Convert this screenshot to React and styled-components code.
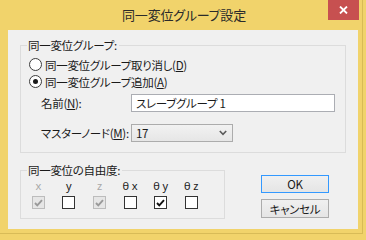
import React from "react";
import styled, { createGlobalStyle, css } from "styled-components";

const Global = createGlobalStyle`
  html, body { margin: 0; padding: 0; }
  body {
    background: #F1D36B;
    width: 366px;
    height: 237px;
    overflow: hidden;
    font-family: "Noto Sans CJK JP", "Noto Sans", sans-serif;
    font-feature-settings: "palt";
    font-size: 11.5px;
    letter-spacing: -0.3px;
    color: #1a1a1a;
  }
`;

const Window = styled.div`
  width: 362px;
  height: 233px;
  background: #F1D36B;
  border-right: 1px solid #D8BB57;
  border-bottom: 1px solid #D8BB57;
  display: flex;
  flex-direction: column;
`;

const TitleBar = styled.div`
  height: 30px;
  display: grid;
  grid-template-columns: 1fr auto 1fr;
  align-items: start;
`;

const Title = styled.div`
  font-size: 13px;
  line-height: 30px;
  color: #2a2a2a;
  letter-spacing: -0.2px;
  padding-left: 6px;
`;

const CloseButton = styled.div`
  justify-self: end;
  margin-right: 3px;
  width: 31px;
  height: 20px;
  background: #C75050;
  display: flex;
  align-items: center;
  justify-content: center;
`;

const Client = styled.div`
  margin-left: 8px;
  width: 350px;
  height: 199px;
  background: #F0F0F0;
  box-sizing: border-box;
  padding: 8px 0 0 12px;
  display: flex;
  flex-direction: column;
`;

const Group = styled.fieldset`
  margin: 0;
  padding: 0;
  border: 1px solid #DCDCDC;
  box-sizing: border-box;
  width: ${(p) => p.$w}px;
  height: ${(p) => p.$h}px;
  min-width: 0;
`;

const Legend = styled.legend`
  padding: 0 2px 0 1px;
  margin-left: 6px;
  line-height: 14px;
  height: 14px;
`;

const GroupBody = styled.div`
  padding: ${(p) => p.$pad};
  display: flex;
  flex-direction: column;
`;

const RadioRow = styled.label`
  display: flex;
  align-items: center;
  height: 17px;
  gap: 3px;
  white-space: nowrap;
`;

const RadioCircle = styled.span`
  width: 11px;
  height: 11px;
  border: 1px solid #3c3c3c;
  border-radius: 50%;
  background: #fff;
  display: flex;
  align-items: center;
  justify-content: center;
  flex: none;
  &::after {
    content: "";
    width: 5px;
    height: 5px;
    border-radius: 50%;
    background: ${(p) => (p.$checked ? "#1a1a1a" : "transparent")};
  }
`;

const FieldRow = styled.div`
  display: grid;
  grid-template-columns: 90px auto;
  align-items: center;
  padding-left: 12px;
  margin-top: ${(p) => p.$mt}px;
  white-space: nowrap;
`;

const Underline = styled.span`
  text-decoration: underline;
`;

const TextBox = styled.div`
  width: 204px;
  height: 18px;
  box-sizing: border-box;
  border: 1px solid #ABADB3;
  background: #fff;
  padding-left: 4px;
  line-height: 16px;
`;

const Combo = styled.div`
  width: 102px;
  height: 18px;
  box-sizing: border-box;
  border: 1px solid #ACACAC;
  background: linear-gradient(#F2F2F2, #E6E6E6);
  display: flex;
  align-items: center;
  justify-content: space-between;
  padding: 0 5px 0 4px;
  line-height: 16px;
`;

const Bottom = styled.div`
  display: flex;
  margin-top: 10px;
  align-items: flex-start;
`;

const AxisGrid = styled.div`
  display: grid;
  grid-template-columns: repeat(6, 30.6px);
  padding: 2px 0 0 2px;
  justify-items: center;
  row-gap: 4px;
`;

const AxisLabel = styled.div`
  height: 13px;
  line-height: 13px;
  font-size: 11px;
  font-family: "Noto Sans", "DejaVu Sans", sans-serif;
  letter-spacing: 0;
  color: ${(p) => (p.$disabled ? "#A8A8A8" : "#1a1a1a")};
  white-space: pre;
`;

const Check = styled.span`
  width: 13px;
  height: 13px;
  box-sizing: border-box;
  display: flex;
  align-items: center;
  justify-content: center;
  ${(p) =>
    p.$disabled
      ? css`
          border: 1px solid #BCBCBC;
          background: #E6E6E6;
        `
      : css`
          border: 1px solid #333;
          background: #fff;
        `}
`;

const Buttons = styled.div`
  display: flex;
  flex-direction: column;
  gap: 6px;
  margin-left: 36px;
  margin-top: 12px;
`;

const Button = styled.div`
  width: 68px;
  height: ${(p) => (p.$default ? 18 : 19)}px;
  box-sizing: border-box;
  border: 1px solid ${(p) => (p.$default ? "#3399FF" : "#ACACAC")};
  background: linear-gradient(#F0F0F0, #E5E5E5);
  display: flex;
  align-items: center;
  justify-content: center;
`;

const CheckMark = ({ color }) => (
  <svg width="9" height="8" viewBox="0 0 9 8">
    <polyline points="1,4 3.3,6.4 8,1.2" fill="none" stroke={color} strokeWidth="1.9" />
  </svg>
);

const axes = [
  { label: "x", disabled: true, checked: true },
  { label: "y", disabled: false, checked: false },
  { label: "z", disabled: true, checked: true },
  { label: "θ x", disabled: false, checked: false },
  { label: "θ y", disabled: false, checked: true },
  { label: "θ z", disabled: false, checked: false },
];

export default function App() {
  return (
    <>
      <Global />
      <Window>
        <TitleBar>
          <span />
          <Title>同一変位グループ設定</Title>
          <CloseButton>
            <svg width="9" height="8" viewBox="0 0 9 8">
              <path d="M1 0.5 L8 7.5 M8 0.5 L1 7.5" stroke="#fff" strokeWidth="1.8" />
            </svg>
          </CloseButton>
        </TitleBar>
        <Client>
          <Group $w={326} $h={115}>
            <Legend>同一変位グループ:</Legend>
            <GroupBody $pad="4px 0 0 8px">
              <RadioRow>
                <RadioCircle />
                <span>
                  同一変位グループ取り消し(<Underline>D</Underline>)
                </span>
              </RadioRow>
              <RadioRow>
                <RadioCircle $checked />
                <span>
                  同一変位グループ追加(<Underline>A</Underline>)
                </span>
              </RadioRow>
              <FieldRow $mt={4}>
                <span>
                  名前(<Underline>N</Underline>):
                </span>
                <TextBox>スレーブグループ 1</TextBox>
              </FieldRow>
              <FieldRow $mt={12}>
                <span>
                  マスターノード(<Underline>M</Underline>):
                </span>
                <Combo>
                  <span>17</span>
                  <svg width="8" height="6" viewBox="0 0 8 6">
                    <polyline points="0.8,1 4,4.4 7.2,1" fill="none" stroke="#5a5a5a" strokeWidth="1.6" />
                  </svg>
                </Combo>
              </FieldRow>
            </GroupBody>
          </Group>
          <Bottom>
            <Group $w={205} $h={56}>
              <Legend>同一変位の自由度:</Legend>
              <GroupBody $pad="0">
                <AxisGrid>
                  {axes.map((a) => (
                    <AxisLabel key={a.label} $disabled={a.disabled}>
                      {a.label}
                    </AxisLabel>
                  ))}
                  {axes.map((a) => (
                    <Check key={a.label} $disabled={a.disabled}>
                      {a.checked && <CheckMark color={a.disabled ? "#9A9A9A" : "#111"} />}
                    </Check>
                  ))}
                </AxisGrid>
              </GroupBody>
            </Group>
            <Buttons>
              <Button $default>OK</Button>
              <Button>キャンセル</Button>
            </Buttons>
          </Bottom>
        </Client>
      </Window>
    </>
  );
}
